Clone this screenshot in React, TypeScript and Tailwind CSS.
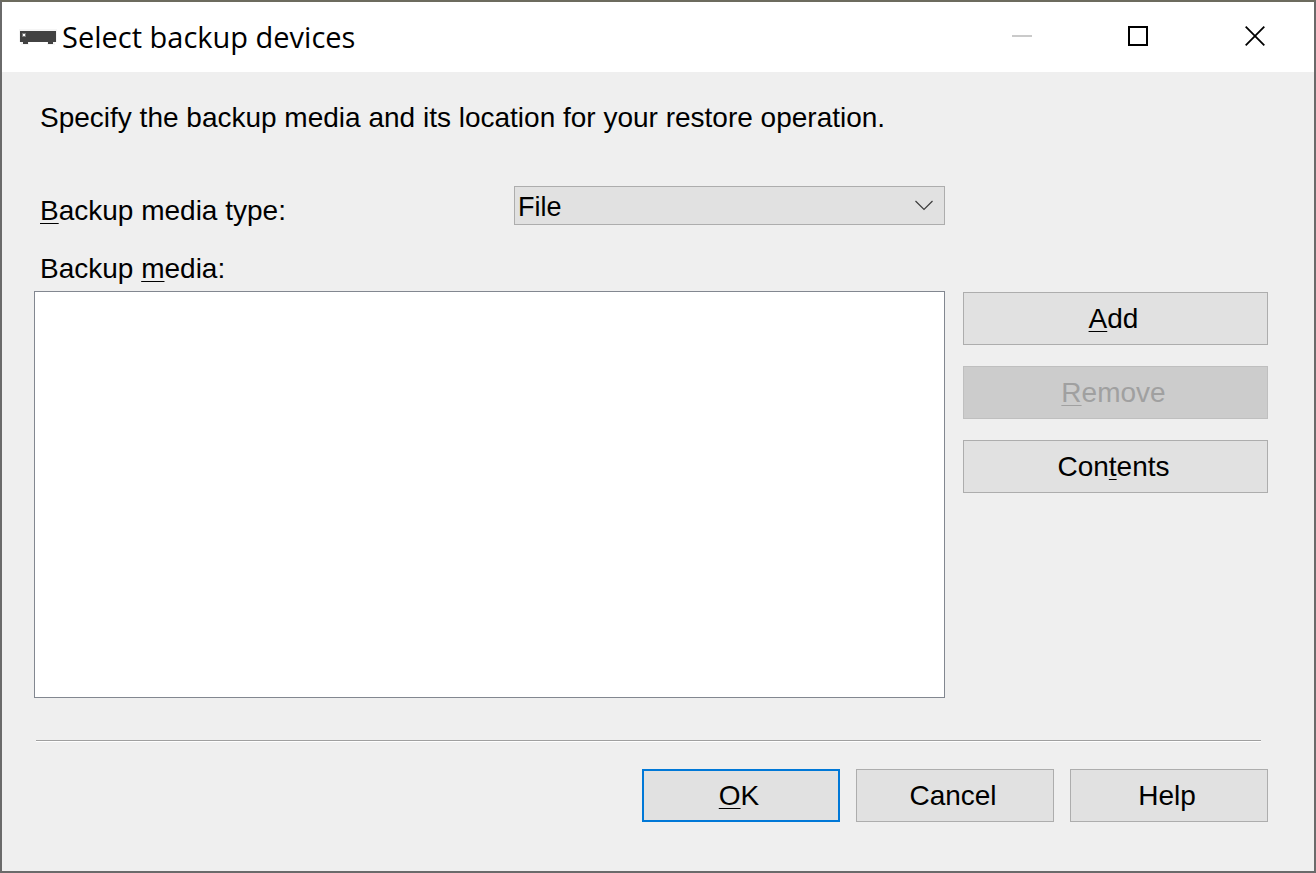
import { useState } from "react";
import type { ButtonHTMLAttributes, ReactNode } from "react";

function Key({ children }: { children: ReactNode }) {
  return (
    <span className="underline decoration-1 underline-offset-[3px] [text-decoration-skip-ink:none]">
      {children}
    </span>
  );
}

function PushButton({
  className,
  ...rest
}: ButtonHTMLAttributes<HTMLButtonElement>) {
  return (
    <button
      type="button"
      className={`h-[53px] pt-px pr-1 text-center ${className}`}
      {...rest}
    />
  );
}

const normal = "border border-[#adadad] bg-[#e1e1e1]";

function DeviceIcon() {
  return (
    <svg width="40" height="18" viewBox="0 0 40 18" shapeRendering="crispEdges" aria-hidden="true">
      <path d="M1 1h38v13h-2v3h-8v-3H11v3H3v-3H1z" fill="#f5f5f5" />
      <path d="M2 3h36v11h-3v2h-5v-2H10v2H5v-2H2z" fill="#424242" />
      <path d="M4 5h4v4H4z" fill="#7a7a7a" />
      <path d="M5 6h2v2H5z" fill="#fff" />
    </svg>
  );
}

export default function App() {
  const [media, setMedia] = useState("File");
  return (
    <div className="flex min-h-screen flex-col border-2 border-x-[#6a6a6a] border-t-[#6c6b5e] border-b-[#6a6a6a] bg-[#efefef] font-['Liberation_Sans',Arial,sans-serif] text-[28px] leading-8 text-black">
      <header className="flex h-[70px] items-center bg-white pl-4">
        <DeviceIcon />
        <h1 className="flex-1 pl-1 font-['Open_Sans','Noto_Sans',sans-serif] text-[29px]">
          Select backup devices
        </h1>
        <div className="flex h-full pb-px">
          <button type="button" disabled aria-label="Minimize" className="flex w-[117px] items-center justify-center">
            <svg width="21" height="21" viewBox="0 0 21 21" shapeRendering="crispEdges">
              <path d="M1 9h20v2H1z" fill="#cacaca" />
            </svg>
          </button>
          <button type="button" aria-label="Maximize" className="flex w-[117px] items-center justify-center">
            <svg width="21" height="21" viewBox="0 0 21 21" shapeRendering="crispEdges">
              <path d="M1 1h18v18H1z" fill="none" stroke="#000" strokeWidth="2" />
            </svg>
          </button>
          <button type="button" aria-label="Close" className="flex w-[117px] items-center justify-center">
            <svg width="21" height="21" viewBox="0 0 21 21">
              <path d="M.7.7l18.6 18.6M19.3.7L.7 19.3" fill="none" stroke="#000" strokeWidth="1.8" />
            </svg>
          </button>
        </div>
      </header>

      <main className="flex flex-1 flex-col pt-[30px] pr-[46px] pb-[49px] pl-8">
        <p className="pl-1.5">Specify the backup media and its location for your restore operation.</p>

        <div className="mt-[52px] flex flex-1 gap-[18px]">
          <div className="flex flex-1 flex-col">
            <div className="flex justify-between pl-1.5">
              <label htmlFor="media-type" className="pt-[9px]">
                <Key>B</Key>ackup media type:
              </label>
              <div className="relative h-[39px] w-[431px]">
                <select
                  id="media-type"
                  value={media}
                  onChange={(e) => setMedia(e.target.value)}
                  className="h-full w-full appearance-none border border-[#adadad] bg-[#e1e1e1] pt-0.5 pr-10 pl-[3px] text-[27px] leading-8"
                >
                  <option>File</option>
                  <option>URL</option>
                </select>
                <svg
                  className="pointer-events-none absolute top-[14px] right-3"
                  width="18"
                  height="11"
                  viewBox="0 0 18 11"
                  aria-hidden="true"
                >
                  <path d="M.5 1L9 9.5 17.5 1" fill="none" stroke="#3c3c3c" strokeWidth="1.2" />
                </svg>
              </div>
            </div>
            <label htmlFor="media-list" className="mt-[26px] pl-1.5">
              Backup <Key>m</Key>edia:
            </label>
            <select
              id="media-list"
              multiple
              className="mt-1.5 w-full flex-1 appearance-none border border-[#828790] bg-white"
            />
          </div>
          <div className="flex w-[305px] flex-col gap-[21px] pt-[106px]">
            <PushButton className={normal}>
              <Key>A</Key>dd
            </PushButton>
            <PushButton disabled className="border border-[#bfbfbf] bg-[#cccccc] text-[#a0a0a0]">
              <Key>R</Key>emove
            </PushButton>
            <PushButton className={normal}>
              Con<Key>t</Key>ents
            </PushButton>
          </div>
        </div>

        <hr className="mt-[42px] mr-[7px] ml-0.5 h-0.5 border-t border-b border-t-[#a0a0a0] border-b-white" />

        <footer className="mt-[27px] flex justify-end gap-4">
          <PushButton className="w-[198px] border-2 border-[#0078d7] bg-[#e1e1e1]">
            <Key>O</Key>K
          </PushButton>
          <PushButton className={`w-[198px] ${normal}`}>Cancel</PushButton>
          <PushButton className={`w-[198px] ${normal}`}>Help</PushButton>
        </footer>
      </main>
    </div>
  );
}
